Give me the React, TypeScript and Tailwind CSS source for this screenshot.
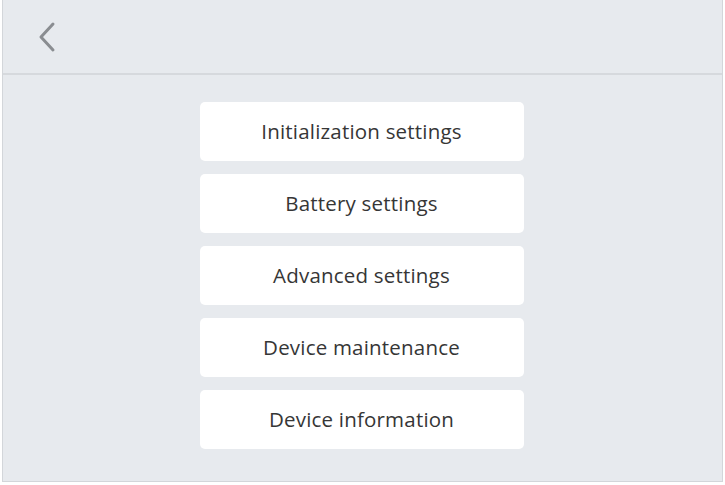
const items = [
    'Initialization settings',
    'Battery settings',
    'Advanced settings',
    'Device maintenance',
    'Device information',
]

const BackIcon = () => (
    <svg width="22" height="32" viewBox="0 0 22 32" fill="none">
        <path d="M17 3 L5 16 L17 29" stroke="#8a8d91" strokeWidth="3" strokeLinecap="round" strokeLinejoin="round"/>
    </svg>
)

export default function App() {
    return (
        <div className="w-[725px] h-[485px] bg-white font-['Open_Sans',sans-serif]">
            <div className="ml-[2px] w-[721px] h-[482px] bg-[#e7eaee] border-l border-r border-b border-[#d3d6da] flex flex-col">
                <header className="h-[75px] border-b-2 border-[#d6d9dd] flex items-center pl-[33px]">
                    <BackIcon/>
                </header>
                <div className="flex flex-col items-center gap-[13px] pt-[27px] pr-[2px]">
                    {items.map((item) => (
                        <button key={item}
                                className="w-[324px] h-[59px] bg-white rounded-[5px] text-[20.5px] tracking-[0.2px] text-[#363636] flex items-center justify-center">
                            {item}
                        </button>
                    ))}
                </div>
            </div>
        </div>
    )
}
